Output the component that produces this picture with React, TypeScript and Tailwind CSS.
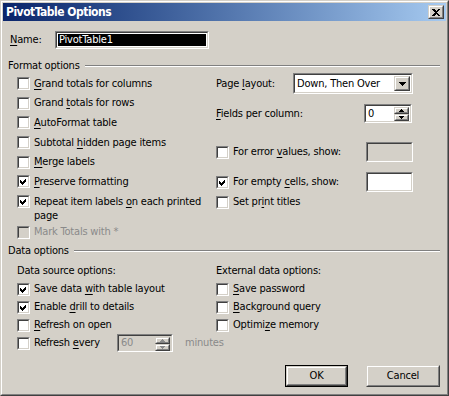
import React from "react";

const FONT = "font-['DejaVu_Sans_Condensed','DejaVu_Sans',sans-serif]";

function Check({ checked = false, disabled = false }: { checked?: boolean; disabled?: boolean }) {
  return (
    <span className="relative block w-[13px] h-[13px] shrink-0">
      <span className="block w-[13px] h-[13px] border border-t-[#808080] border-l-[#808080] border-b-white border-r-white">
        <span
          className={`block w-[11px] h-[11px] border border-t-[#404040] border-l-[#404040] border-b-[#d4d0c8] border-r-[#d4d0c8] ${
            disabled ? "bg-[#d4d0c8]" : "bg-white"
          }`}
        />
      </span>
      {checked && (
        <svg className="absolute left-0 top-0" width="13" height="13" viewBox="0 0 13 13" shapeRendering="crispEdges">
          <path d="M3 5L5 7L9 3L9 6L5 10L3 8Z" fill="#000" />
        </svg>
      )}
    </span>
  );
}

function Row({
  children,
  checked = false,
  disabled = false,
  h = "h-[19.6px]",
}: {
  children: React.ReactNode;
  checked?: boolean;
  disabled?: boolean;
  h?: string;
}) {
  return (
    <div className={`flex items-center gap-[4px] ${h}`}>
      <Check checked={checked} disabled={disabled} />
      <span className={`whitespace-nowrap ${disabled ? "text-[#8a8a8a]" : ""}`}>{children}</span>
    </div>
  );
}

function U({ children }: { children: React.ReactNode }) {
  return <span className="underline underline-offset-[2px]">{children}</span>;
}

function Sunken({ className = "", children, inner = "bg-white" }: { className?: string; children?: React.ReactNode; inner?: string }) {
  return (
    <div className={`shrink-0 border border-t-[#808080] border-l-[#808080] border-b-white border-r-white ${className}`}>
      <div className={`h-full w-full border border-t-[#404040] border-l-[#404040] border-b-[#d4d0c8] border-r-[#d4d0c8] flex items-center ${inner}`}>
        {children}
      </div>
    </div>
  );
}

function Raised({ className = "", children }: { className?: string; children?: React.ReactNode }) {
  return (
    <div className={`border border-t-[#d4d0c8] border-l-[#d4d0c8] border-b-[#404040] border-r-[#404040] bg-[#d4d0c8] ${className}`}>
      <div className="h-full w-full border border-t-white border-l-white border-b-[#808080] border-r-[#808080] flex items-center justify-center">
        {children}
      </div>
    </div>
  );
}

function Spin({ color = "#000" }: { color?: string }) {
  return (
    <div className="flex flex-col w-[15px] h-full shrink-0">
      <Raised className="flex-1">
        <svg width="5" height="3" viewBox="0 0 5 3" shapeRendering="crispEdges">
          <path d="M2 0H3V1H4V2H5V3H0V2H1V1H2Z" fill={color} />
        </svg>
      </Raised>
      <Raised className="flex-1">
        <svg width="5" height="3" viewBox="0 0 5 3" shapeRendering="crispEdges">
          <path d="M0 0H5V1H4V2H3V3H2V2H1V1H0Z" fill={color} />
        </svg>
      </Raised>
    </div>
  );
}

function Header({ children }: { children: React.ReactNode }) {
  return (
    <div className="flex items-center h-[14px] pl-[5px] pr-[6px]">
      <span className="whitespace-nowrap">{children}</span>
      <div className="flex-1 ml-[5px] h-[2px] border-t border-t-[#808080] border-b border-b-white" />
    </div>
  );
}

export default function App() {
  return (
    <div className={`w-[449px] h-[396px] bg-[#d4d0c8] text-black text-[11px] leading-[14px] tracking-[-0.2px] ${FONT}`}>
      <div className="w-full h-full border border-t-[#d4d0c8] border-l-[#d4d0c8] border-b-[#404040] border-r-[#404040]">
        <div className="w-full h-full border border-t-white border-l-white border-b-[#808080] border-r-[#808080] p-[1px] flex flex-col">
          {/* Title bar */}
          <div className="h-[18px] shrink-0 bg-linear-to-r from-[#0a246a] to-[#a6caf0] flex items-center pl-[3px] pr-[2px]">
            <span className="text-white font-bold text-[12px] tracking-[-0.5px] whitespace-nowrap">PivotTable Options</span>
            <Raised className="ml-auto w-[16px] h-[14px]">
              <svg width="8" height="7" viewBox="0 0 8 7" shapeRendering="crispEdges">
                <path d="M0 0H2L4 2L6 0H8L5 3.5L8 7H6L4 5L2 7H0L3 3.5Z" fill="#000" />
              </svg>
            </Raised>
          </div>

          {/* Name */}
          <div className="flex items-center h-[18px] mt-[10px] pl-[7px]">
            <span className="w-[45px] shrink-0">
              <U>N</U>ame:
            </span>
            <Sunken className="w-[154px] h-[18px]" inner="bg-white p-[1px]">
              <div className="h-full w-full bg-black text-white pl-[1px] flex items-center">PivotTable1</div>
            </Sunken>
          </div>

          <div className="mt-[10px]">
            <Header>Format options</Header>
          </div>

          {/* Format options grid */}
          <div className="grid grid-cols-[199px_1fr] h-[171px] pl-[14px]">
            <div className="flex flex-col pt-[1px]">
              <Row>
                <U>G</U>rand totals for columns
              </Row>
              <Row>
                Grand <U>t</U>otals for rows
              </Row>
              <Row>
                <U>A</U>utoFormat table
              </Row>
              <Row>
                Subtotal <U>h</U>idden page items
              </Row>
              <Row>
                <U>M</U>erge labels
              </Row>
              <Row checked>
                <U>P</U>reserve formatting
              </Row>
              <div className="flex items-start gap-[4px] h-[31px]">
                <span className="mt-[3.5px]">
                  <Check checked />
                </span>
                <span className="pt-[3px]">
                  Repeat item labels <U>o</U>n each printed
                  <br />
                  page
                </span>
              </div>
              <Row disabled>Mark Totals with *</Row>
            </div>

            <div className="flex flex-col">
              <div className="flex items-center h-[21px]">
                <span className="w-[77px] shrink-0 whitespace-nowrap">
                  Page <U>l</U>ayout:
                </span>
                <Sunken className="w-[120px] h-[21px]" inner="bg-white pr-[1px] py-[1px]">
                  <span className="pl-[2px] flex-1 whitespace-nowrap">Down, Then Over</span>
                  <Raised className="w-[16px] h-full">
                    <svg width="7" height="4" viewBox="0 0 7 4" shapeRendering="crispEdges">
                      <path d="M0 0H7V1H6V2H5V3H4V4H3V3H2V2H1V1H0Z" fill="#000" />
                    </svg>
                  </Raised>
                </Sunken>
              </div>

              <div className="flex items-center h-[19px] mt-[10px]">
                <span className="whitespace-nowrap">
                  <U>F</U>ields per column:
                </span>
                <Sunken className="ml-auto mr-[34px] w-[48px] h-[19px]" inner="bg-white pr-[1px] py-[1px]">
                  <span className="pl-[2px] flex-1">0</span>
                  <Spin />
                </Sunken>
              </div>

              <div className="flex items-center h-[20px] mt-[19px]">
                <Row h="h-[20px]">
                  For error <U>v</U>alues, show:
                </Row>
                <Sunken className="ml-auto mr-[33px] w-[47px] h-[20px]" inner="bg-[#d4d0c8]" />
              </div>

              <div className="flex items-center h-[20px] mt-[10px]">
                <Row h="h-[20px]" checked>
                  For empty <U>c</U>ells, show:
                </Row>
                <Sunken className="ml-auto mr-[33px] w-[47px] h-[20px]" />
              </div>

              <Row h="h-[20px]">
                Set pr<U>i</U>nt titles
              </Row>
            </div>
          </div>

          <Header>Data options</Header>

          {/* Data options grid */}
          <div className="grid grid-cols-[199px_1fr] mt-[4px] pl-[14px]">
            <div className="flex flex-col">
              <div className="h-[18px] flex items-center">Data source options:</div>
              <Row h="h-[18px]" checked>
                Save data <U>w</U>ith table layout
              </Row>
              <Row h="h-[18px]" checked>
                Enable <U>d</U>rill to details
              </Row>
              <Row h="h-[18px]">
                <U>R</U>efresh on open
              </Row>
              <div className="flex items-center h-[18px]">
                <div className="flex items-center gap-[4px] w-[100px] shrink-0">
                  <Check />
                  <span className="whitespace-nowrap">
                    Refresh <U>e</U>very
                  </span>
                </div>
                <Sunken className="w-[56px] h-[18px]" inner="bg-[#d4d0c8] pr-[1px] py-[1px]">
                  <span className="pl-[2px] flex-1 text-[#8a8a8a]">60</span>
                  <Spin color="#8a8a8a" />
                </Sunken>
                <span className="ml-[12px] shrink-0 whitespace-nowrap text-[#8a8a8a]">minutes</span>
              </div>
            </div>
            <div className="flex flex-col">
              <div className="h-[18px] flex items-center">External data options:</div>
              <Row h="h-[18px]">
                <U>S</U>ave password
              </Row>
              <Row h="h-[18px]">
                <U>B</U>ackground query
              </Row>
              <Row h="h-[18px]">
                Optimi<U>z</U>e memory
              </Row>
            </div>
          </div>

          {/* Buttons */}
          <div className="flex justify-end gap-[18px] pr-[6px] mt-[13px]">
            <div className="w-[63px] h-[22px] border border-black">
              <Raised className="w-full h-full">OK</Raised>
            </div>
            <Raised className="w-[74px] h-[22px]">Cancel</Raised>
          </div>
        </div>
      </div>
    </div>
  );
}
